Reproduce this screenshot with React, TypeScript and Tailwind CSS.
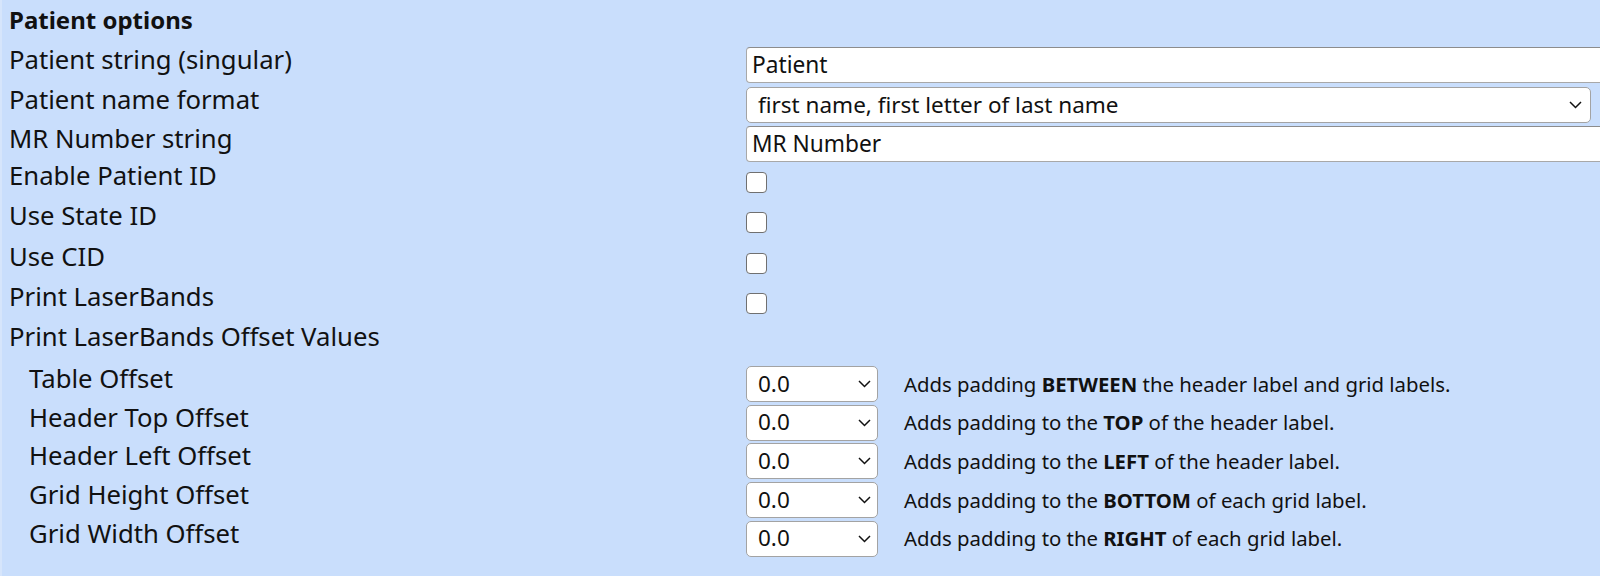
import React from "react";

function Chevron() {
  return (
    <svg width="13" height="8" viewBox="0 0 13 8" className="pointer-events-none shrink-0">
      <path d="M1 1 L6.5 6.5 L12 1" fill="none" stroke="#111" strokeWidth="1.5" />
    </svg>
  );
}

function SelectBox({ value, wide }: { value: string; wide?: boolean }) {
  return (
    <div
      className={`h-[36px] shrink-0 bg-white border border-[#a3a3a3] rounded-[5px] flex items-center justify-between pl-[11px] ${
        wide ? "w-[845px] pr-[8px]" : "w-[132px] pr-[6px]"
      }`}
    >
      <span className="text-[22.5px] leading-none whitespace-nowrap">{value}</span>
      <Chevron />
    </div>
  );
}

function TextBox({ value }: { value: string }) {
  return (
    <div className="h-[36px] w-[900px] shrink-0 bg-white border border-[#a8a8a8] border-t-[#8c8c8c] rounded-[4px] flex items-center pl-[5px]">
      <span className="text-[22.7px] leading-none whitespace-nowrap">{value}</span>
    </div>
  );
}

function Check() {
  return <div className="w-[21px] h-[21px] mt-[9px] bg-white border-[1.5px] border-[#707070] rounded-[4px]" />;
}

const offsets = [
  { label: "Table Offset", pre: "Adds padding ", bold: "BETWEEN", post: " the header label and grid labels." },
  { label: "Header Top Offset", pre: "Adds padding to the ", bold: "TOP", post: " of the header label." },
  { label: "Header Left Offset", pre: "Adds padding to the ", bold: "LEFT", post: " of the header label." },
  { label: "Grid Height Offset", pre: "Adds padding to the ", bold: "BOTTOM", post: " of each grid label." },
  { label: "Grid Width Offset", pre: "Adds padding to the ", bold: "RIGHT", post: " of each grid label." },
];

export default function App() {
  return (
    <div className="w-[1600px] h-[576px] overflow-hidden bg-[#c9defc] border-l-2 border-[#d6e5fb] text-[#111] font-['Noto_Sans',sans-serif]">
      <div className="pl-[7px]">
        <div className="h-[47px] pt-[6px]">
          <div className="text-[24px] leading-[28px] font-bold whitespace-nowrap">Patient options</div>
        </div>

        <div className="h-[40px] flex">
          <div className="w-[737px] shrink-0 text-[25.7px] leading-[26px] whitespace-nowrap">Patient string (singular)</div>
          <TextBox value="Patient" />
        </div>
        <div className="h-[39px] flex">
          <div className="w-[737px] shrink-0 text-[25.7px] leading-[26px] whitespace-nowrap">Patient name format</div>
          <SelectBox value="first name, first letter of last name" wide />
        </div>
        <div className="h-[37px] flex">
          <div className="w-[737px] shrink-0 text-[25.7px] leading-[26px] whitespace-nowrap">MR Number string</div>
          <TextBox value="MR Number" />
        </div>

        {["Enable Patient ID", "Use State ID", "Use CID", "Print LaserBands"].map((l) => (
          <div key={l} className="h-[40.3px] flex">
            <div className="w-[737px] shrink-0 text-[25.7px] leading-[26px] whitespace-nowrap">{l}</div>
            <Check />
          </div>
        ))}

        <div className="h-[41.7px]">
          <div className="text-[25.7px] leading-[26px] whitespace-nowrap">Print LaserBands Offset Values</div>
        </div>

        <div className="flex flex-col gap-[2.7px]">
          {offsets.map((o) => (
            <div key={o.label} className="h-[36px] flex">
              <div className="w-[737px] shrink-0 pl-[20px] text-[25.7px] leading-[26px] whitespace-nowrap">{o.label}</div>
              <SelectBox value="0.0" />
              <div className="ml-[26px] h-[36px] flex items-center text-[20.35px] leading-none whitespace-nowrap">
                <span>
                  {o.pre}
                  <b className="font-bold">{o.bold}</b>
                  {o.post}
                </span>
              </div>
            </div>
          ))}
        </div>
      </div>
    </div>
  );
}
